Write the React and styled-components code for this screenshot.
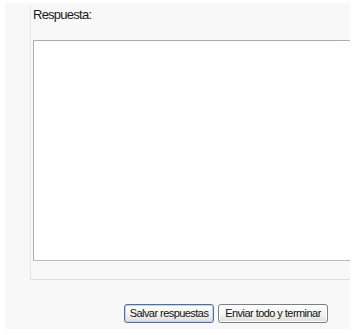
import React from "react";
import styled, { createGlobalStyle } from "styled-components";

const Global = createGlobalStyle`
  html, body { margin: 0; padding: 0; background: #ffffff; }
  body { font-family: Arial, "Liberation Sans", sans-serif; }
`;

const Page = styled.div`
  margin: 3px 6px 0 5px;
  width: 345px;
  height: 326px;
  background: #f8f8f8;
  overflow: hidden;
  display: flex;
  flex-direction: column;
`;

const Panel = styled.div`
  margin-left: 25px;
  margin-top: 2px;
  width: 360px;
  border-left: 1px solid #e6e6e6;
  border-bottom: 1px solid #dedede;
  padding: 2px 0 18px 2px;
  box-sizing: border-box;
`;

const Label = styled.div`
  font-family: Arial, "Liberation Sans", sans-serif;
  font-size: 13px;
  letter-spacing: -0.75px;
  line-height: 16px;
  color: #1a1a1a;
  margin-bottom: 17px;
`;

const Answer = styled.textarea`
  display: block;
  width: 340px;
  height: 221px;
  box-sizing: border-box;
  margin: 0;
  border: 1px solid #b7bcc3;
  border-top-color: #a9aeb6;
  border-left-color: #a9aeb6;
  background: #ffffff;
  resize: none;
  outline: none;
`;

const Actions = styled.div`
  display: flex;
  justify-content: flex-end;
  gap: 4px;
  padding: 24px 22px 0 0;
`;

const Button = styled.button`
  font-family: Arial, "Liberation Sans", sans-serif;
  font-size: 11px;
  letter-spacing: -0.55px;
  white-space: nowrap;
  color: #111;
  height: 19px;
  padding: 0;
  box-sizing: border-box;
  border: 1px solid ${(p) => (p.$primary ? "#4f6f9f" : "#76808d")};
  border-radius: 3px;
  background: linear-gradient(#ffffff 0%, #f3f3f1 55%, #dddcd7 100%);
  box-shadow: inset 0 0 0 1px ${(p) => (p.$primary ? "#c3d3ee" : "#ffffff")};
  line-height: 15px;
  width: ${(p) => p.$w}px;
  text-align: center;
`;

export default function App() {
  return (
    <>
      <Global />
      <Page>
        <Panel>
          <Label>Respuesta:</Label>
          <Answer />
        </Panel>
        <Actions>
          <Button $primary $w={90}>Salvar respuestas</Button>
          <Button $w={110}>Enviar todo y terminar</Button>
        </Actions>
      </Page>
    </>
  );
}
